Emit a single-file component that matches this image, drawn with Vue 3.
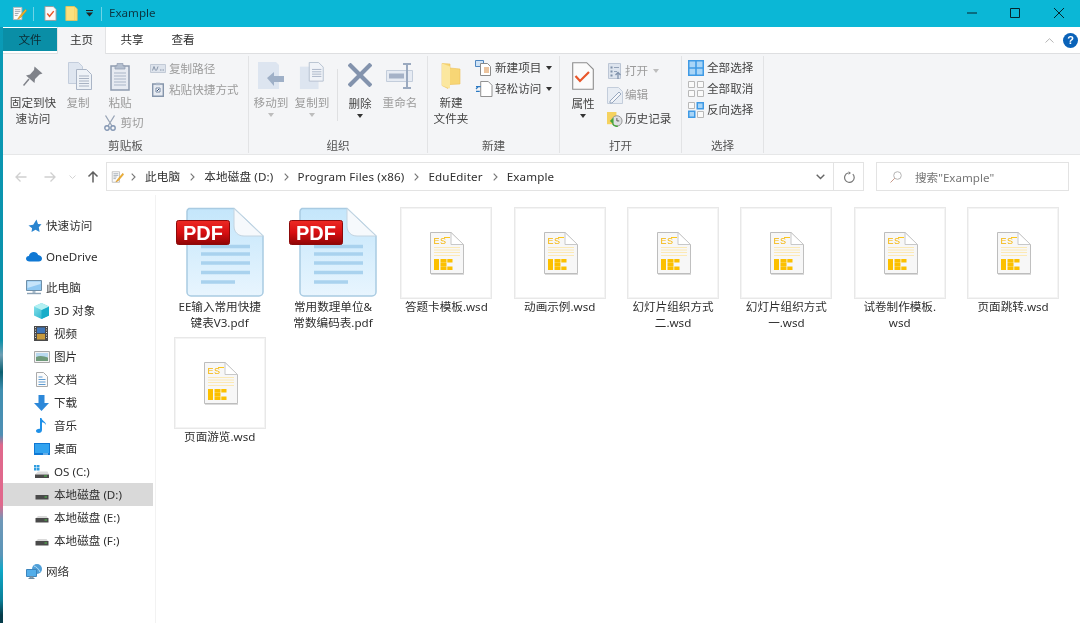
<script setup>
const nav = [
  { icon: 'star', label: '快速访问', lvl: 0 },
  { icon: 'cloud', label: 'OneDrive', lvl: 0, gap: true },
  { icon: 'pc', label: '此电脑', lvl: 0, gap: true },
  { icon: 'cube', label: '3D 对象', lvl: 1 },
  { icon: 'film', label: '视频', lvl: 1 },
  { icon: 'pic', label: '图片', lvl: 1 },
  { icon: 'doc', label: '文档', lvl: 1 },
  { icon: 'down', label: '下载', lvl: 1 },
  { icon: 'music', label: '音乐', lvl: 1 },
  { icon: 'desk', label: '桌面', lvl: 1 },
  { icon: 'osdrive', label: 'OS (C:)', lvl: 1 },
  { icon: 'drive', label: '本地磁盘 (D:)', lvl: 1, active: true },
  { icon: 'drive', label: '本地磁盘 (E:)', lvl: 1 },
  { icon: 'drive', label: '本地磁盘 (F:)', lvl: 1 },
  { icon: 'net', label: '网络', lvl: 0, gap: true }
]
const files = [
  { type: 'pdf', name: 'EE输入常用快捷\n键表V3.pdf' },
  { type: 'pdf', name: '常用数理单位&\n常数编码表.pdf' },
  { type: 'wsd', name: '答题卡模板.wsd' },
  { type: 'wsd', name: '动画示例.wsd' },
  { type: 'wsd', name: '幻灯片组织方式\n二.wsd' },
  { type: 'wsd', name: '幻灯片组织方式\n一.wsd' },
  { type: 'wsd', name: '试卷制作模板.\nwsd' },
  { type: 'wsd', name: '页面跳转.wsd' },
  { type: 'wsd', name: '页面游览.wsd' }
]
const crumbs = ['此电脑', '本地磁盘 (D:)', 'Program Files (x86)', 'EduEditer', 'Example']
</script>

<template>
  <svg class="defs" aria-hidden="true">
    <defs>
      <linearGradient id="pageBlue" x1="0" y1="0" x2="0" y2="1"><stop offset="0" stop-color="#c4e6fb"/><stop offset="1" stop-color="#e8f5fe"/></linearGradient>
      <linearGradient id="redBadge" x1="0" y1="0" x2="0" y2="1"><stop offset="0" stop-color="#ec2a24"/><stop offset=".5" stop-color="#d80f12"/><stop offset="1" stop-color="#8f0505"/></linearGradient>
      <linearGradient id="cubeFill" x1="0" y1="0" x2="1" y2="1"><stop offset="0" stop-color="#8fe6ee"/><stop offset="1" stop-color="#14a9c6"/></linearGradient>
    </defs>
    <symbol id="notes" viewBox="0 0 16 16"><path d="M1.500 1.500h9v13h-9z" fill="#fbfbfb" stroke="#b9b9b9"/><path d="M3 4h6M3 6h6M3 8h4M3 10h3" stroke="#9aa3ad"/><path d="M14.500 3.500 8 11l-2 3 3-1.500 6.500-7.500z" fill="#f5b52d" stroke="#c9851a" stroke-width=".6"/></symbol>
    <symbol id="checkpage" viewBox="0 0 14 16"><path d="M1 .5h9l3 3v12H1z" fill="#fafafa" stroke="#9b9b9b"/><path d="M3.500 8l2.500 3 4.500-5.500" fill="none" stroke="#e8562a" stroke-width="1.500"/></symbol>
    <symbol id="tfolder" viewBox="0 0 13 16"><path d="M.5.500h9l3 2.500v12.500h-12z" fill="#fbe07e" stroke="#e4c25c"/><path d="M10 1v14" stroke="#f7cf60"/></symbol>
    <symbol id="pin" viewBox="0 0 20 20"><path d="M11.500.5 19.500 7.500l-3 1-4.500 4.500-.5 4L3 9.500l4-1L11 4z" fill="#7f8289"/><path d="M6 13 .5 19.500" stroke="#7f8289" stroke-width="1.500"/></symbol>
    <symbol id="copy" viewBox="0 0 24 28"><path d="M.5.500h10l4 4v17H.5z" fill="#dfe6f0" stroke="#c3cddc"/><path d="M8.500 7.500h10l5 5v15h-15z" fill="#eef2f7" stroke="#aab5c6"/><path d="M11 14h10M11 16.500h10M11 19h10M11 21.500h10M11 24h10" stroke="#a8b2c2"/></symbol>
    <symbol id="paste" viewBox="0 0 20 29"><path d="M1 4h18v24H1z" fill="#e7ebf2" stroke="#8f9cb0" stroke-width="1.500"/><path d="M7 4V1.500h6V4h2v3H5V4z" fill="#b4bfcf" stroke="#8f9cb0" stroke-width=".7"/><path d="M4 11h12M4 14h12M4 17h12M4 20h12M4 23h12" stroke="#a9b5c7"/></symbol>
    <symbol id="scissors" viewBox="0 0 12 16"><path d="M1.500.5 8 11M10.500.5 4 11" stroke="#98a4b6" stroke-width="1.300" fill="none"/><circle cx="3" cy="13" r="2.200" fill="none" stroke="#8497b3" stroke-width="1.400"/><circle cx="9" cy="13" r="2.200" fill="none" stroke="#8497b3" stroke-width="1.400"/></symbol>
    <symbol id="cpath" viewBox="0 0 16 9"><path d="M.5.500h15v8H.5z" fill="#dde3ec" stroke="#c2cad6"/><path d="M2.500 6.500 4 2.500l1.500 4M6.500 6.500 8 2.500M10 6h1.500M12.500 6H14" stroke="#7f8da3" fill="none" stroke-width=".9"/></symbol>
    <symbol id="pshort" viewBox="0 0 12 15"><path d="M.7 2h10.600v12.300H.7z" fill="#e7ebf2" stroke="#8595ab" stroke-width="1.400"/><path d="M4 .7h4v2.500H4z" fill="#a9b5c7"/><path d="M4 6h4v4H4z" fill="#fff" stroke="#7688a2"/><path d="M5 9l2-2" stroke="#35507a"/></symbol>
    <symbol id="move" viewBox="0 0 27 28"><path d="M0 0h18l3 3v24H0z" fill="#dde5f0"/><path d="M9 16 16 10v4h10v6H16v4z" fill="#9fb0c7"/></symbol>
    <symbol id="copyto" viewBox="0 0 27 30"><path d="M0 5h20v24H0z" fill="#dde5f0"/><path d="M10 .5h10l5 5v15H10z" fill="#f0f3f8" stroke="#b4bfcf"/><path d="M13 8h10M13 10.500h10M13 13h10M13 15.500h10" stroke="#a8b4c6"/></symbol>
    <symbol id="del" viewBox="0 0 24 24"><path d="M2.500 2.500 21.500 21.500M21.500 2.500 2.500 21.500" stroke="#8393ad" stroke-width="4.200" stroke-linecap="square"/></symbol>
    <symbol id="rename" viewBox="0 0 28 26"><path d="M.5 7.500h26v11H.5z" fill="#e6ebf3" stroke="#c3cddb"/><path d="M3 10.500h15v5H3z" fill="#a5b2c7"/><path d="M21 1v24M17 1h8M17 25h8" stroke="#9aa9bf" stroke-width="2" fill="none"/></symbol>
    <symbol id="folder" viewBox="0 0 20 27"><path d="M1 1l8 .5v4l10 1v15L9 22 7 26 1 23z" fill="#f7d675" stroke="#eec158" stroke-width=".6"/><path d="M1 1l8 3v22L1 23z" fill="#fbe79f"/></symbol>
    <symbol id="newitem" viewBox="0 0 18 16"><path d="M.5.500h8v6H.5z" fill="#cfe3f6" stroke="#4f86c0"/><path d="M5.500 3.500h7l3 3v9h-10z" fill="#fff" stroke="#8b8b8b"/><path d="M9 8h5M9 10h5M9 12h5" stroke="#d9883c"/></symbol>
    <symbol id="easy" viewBox="0 0 18 17"><path d="M5.500.5h8l4 4v12h-12z" fill="#fff" stroke="#8a8a8a"/><path d="M.5 6h5M.5 8.500 3 6M.5 11h4" stroke="#2b79c2" stroke-width="1.200" fill="none"/></symbol>
    <symbol id="props" viewBox="0 0 22 28"><path d="M.7.700h14l6.600 6.600v20H.7z" fill="#fbfbfb" stroke="#8d8d8d" stroke-width="1.100"/><path d="M3.500 14l4.500 5 9-9" fill="none" stroke="#e8562a" stroke-width="2.200"/></symbol>
    <symbol id="openic" viewBox="0 0 14 17"><path d="M.5.500h12v15H.5z" fill="#dde4ee" stroke="#bcc6d5"/><path d="M2.500 3.500h2v2h-2zM2.500 7.500h2v2h-2zM2.500 11.500h2v2h-2z" fill="#7f90a8"/><path d="M6 4.500h5M6 8.500h3" stroke="#93a2b8"/><path d="M10 16V10M7.500 12 10 9.500 12.500 12" stroke="#8193ad" stroke-width="1.300" fill="none"/></symbol>
    <symbol id="edit" viewBox="0 0 16 17"><path d="M.5.500h11l4 4v12H.5z" fill="#e8edf4" stroke="#c3cddb"/><path d="M3 14 12 5l2 2-9 9H3z" fill="#f4f6fa" stroke="#98a8bf"/></symbol>
    <symbol id="hist" viewBox="0 0 17 16"><path d="M0 0h10v13H0z" fill="#f5d25f"/><circle cx="10.500" cy="9.500" r="5.500" fill="#dfe1e3" stroke="#8f8f8f"/><path d="M10.500 6.500v3h2.500" stroke="#555" fill="none"/><path d="M3 9.500 7 6v7z" fill="#47a63a"/><path d="M6 12.500c1 2 3.500 3 5.500 2.500" stroke="#47a63a" stroke-width="1.500" fill="none"/></symbol>
    <symbol id="selall" viewBox="0 0 16 16"><path d="M0 0h16v16H0z" fill="#3f9ae5"/><path d="M1.500 1.500h5.700v5.700H1.500zM8.800 1.500h5.700v5.700H8.800zM1.500 8.800h5.700v5.700H1.500zM8.800 8.800h5.700v5.700H8.800z" fill="#a9d5f7"/></symbol>
    <symbol id="selnone" viewBox="0 0 16 16"><path d="M.5.500h6v6h-6zM9.500.500h6v6h-6zM.5 9.500h6v6h-6zM9.500 9.500h6v6h-6z" fill="#fafafa" stroke="#b8b8b8"/></symbol>
    <symbol id="selinv" viewBox="0 0 16 16"><path d="M.5.500h6v6h-6zM9.500 9.500h6v6h-6z" fill="#fafafa" stroke="#b8b8b8"/><path d="M8.500 0H16v7.500H8.500zM0 8.500h7.500V16H0z" fill="#3f9ae5"/><path d="M10 1.500h4.500V6H10zM1.500 10H6v4.500H1.500z" fill="#a9d5f7"/></symbol>
    <symbol id="star" viewBox="0 0 14 14"><path d="M8.500.5 10 5l3.500.3-2.700 2.900.8 4.800L7.500 10.800 3.500 13l.6-3.800L.5 6.500 5.200 5.800z" fill="#2a85d0"/></symbol>
    <symbol id="cloud" viewBox="0 0 16 11"><path d="M3.500 10.500C1.500 10.500 0 9.300 0 7.700 0 6.200 1.200 5 2.800 5 3.500 2.500 5.500 1 7.800 1c2 0 3.700 1.100 4.400 3C14.400 4.200 16 5.700 16 7.500c0 1.800-1.400 3-3.200 3z" fill="#0f78d4"/></symbol>
    <symbol id="pc" viewBox="0 0 16 15"><path d="M.5.500h15v10H.5z" fill="#8fc8f2" stroke="#6f8fa8"/><path d="M1.500 1.500h13V4L1.500 8z" fill="#c6e4fa"/><path d="M6.500 11h3v2h-3z" fill="#a9bccb"/><path d="M1 13.500h14" stroke="#8ba2b5" stroke-width="1.400"/></symbol>
    <symbol id="cube" viewBox="0 0 15 16"><path d="M7.500 0 15 3.500v9L7.500 16 0 12.500v-9z" fill="url(#cubeFill)"/><path d="M7.500 7 15 3.500v9L7.500 16z" fill="#17adc9"/><path d="M0 3.500 7.500 0 15 3.500 7.500 7z" fill="#b3f0f2"/></symbol>
    <symbol id="film" viewBox="0 0 14 15"><path d="M0 0h14v15H0z" fill="#4a4a4a"/><path d="M3 1.500h8v5.500H3z" fill="#3d74b8"/><path d="M3 8h8v5.500H3z" fill="#c79a3c"/><path d="M1 1.500h1M1 4h1M1 6.500h1M1 9h1M1 11.500h1M12 1.500h1M12 4h1M12 6.500h1M12 9h1M12 11.500h1" stroke="#ddd"/></symbol>
    <symbol id="pic" viewBox="0 0 16 12"><path d="M.5.500h15v11H.5z" fill="#f2f2f2" stroke="#a8a8a8"/><path d="M2 2h12v4H2z" fill="#b9d9ef"/><path d="M2 6c4-2 8-1 12 .5V10H2z" fill="#6f9a7a"/></symbol>
    <symbol id="doc" viewBox="0 0 12 15"><path d="M.5.500h7l4 4v10H.5z" fill="#fbfbfb" stroke="#aaa"/><path d="M2.500 5h4M2.500 7.500h7M2.500 10h7M2.500 12.500h7" stroke="#5e9bd1"/></symbol>
    <symbol id="down" viewBox="0 0 15 16"><path d="M4.500 0h6v8H15l-7.500 8L0 8h4.500z" fill="#2c88d9"/></symbol>
    <symbol id="music" viewBox="0 0 11 15"><path d="M4 0h1.500c.3 3 4.500 3.500 4.500 7-.8-1.500-2.500-2.500-4-2.700V12c0 1.800-1.500 3-3.200 3C1.300 15 0 14.200 0 13c0-1.500 1.800-2.500 4-2.200z" fill="#1e90e8"/></symbol>
    <symbol id="desk" viewBox="0 0 16 12"><path d="M0 0h16v12H0z" fill="#0f78d4"/><path d="M1 1h14v9H1z" fill="#32a3ef"/><path d="M9 11h5" stroke="#bfe1fa"/></symbol>
    <symbol id="osdrive" viewBox="0 0 15 14"><path d="M0 0h2.500v2.500H0zM3 0h2.500v2.500H3zM0 3h2.500v2.500H0zM3 3h2.500v2.500H3z" fill="#2f9de0"/><path d="M2.500 8 4 6.500h9.500L15 9.500H1z" fill="#dcdcdc"/><path d="M1 9.500h14v3.500H1z" fill="#4a4a4a"/><path d="M10 11h3" stroke="#4fc14a"/></symbol>
    <symbol id="drive" viewBox="0 0 14 7"><path d="M1.500 1.500 3 0h8.500L13 2H1z" fill="#d9d9d9"/><path d="M.5 2h13v4.500H.5z" fill="#4a4a4a"/><path d="M9.500 4h2.500" stroke="#4fc14a"/></symbol>
    <symbol id="net" viewBox="0 0 16 15"><circle cx="11" cy="5" r="5" fill="#4f9fd8"/><path d="M8 2c2 .5 5 3 6 6" stroke="#b4dcf5" fill="none"/><path d="M.5 5.500h10v7H.5z" fill="#53aeea" stroke="#3c85bd"/><path d="M4 12.500h3V14H4zM2.500 14.500h6" stroke="#6d8aa0" fill="#9db7ca"/></symbol>
  </svg>

  <div class="app">
    <div class="strip"></div>
    <div class="win">
      <header class="title">
        <svg class="ti t1"><use href="#notes"/></svg>
        <i class="tsep"></i>
        <svg class="ti t2"><use href="#checkpage"/></svg>
        <svg class="ti t3"><use href="#tfolder"/></svg>
        <svg class="tdrop" viewBox="0 0 7 7"><path d="M0 0h7v1H0zM0 2.500h7L3.500 6.500z" fill="#222"/></svg>
        <i class="tsep t4"></i>
        <span class="tname">Example</span>
        <div class="controls">
          <svg class="c1" viewBox="0 0 10 10"><path d="M0 5h10" stroke="#0b3b46" stroke-width="1.200"/></svg>
          <svg class="c2" viewBox="0 0 10 10"><path d="M.5.500h9v9h-9z" fill="none" stroke="#06252c"/></svg>
          <svg class="c3" viewBox="0 0 10 10"><path d="M0 0l10 10M10 0 0 10" stroke="#06252c"/></svg>
        </div>
      </header>

      <nav class="tabs">
        <span class="tab file">文件</span>
        <span class="tab on">主页</span>
        <span class="tab t3w">共享</span>
        <span class="tab t4w">查看</span>
        <svg class="collapse" viewBox="0 0 9 5"><path d="M.5 4.500 4.500.7l4 3.800" fill="none" stroke="#b5b5b5"/></svg>
        <span class="help">?</span>
      </nav>

      <section class="ribbon">
        <div class="group g1">
          <div class="body">
            <div class="big w60"><svg class="ic pinic"><use href="#pin"/></svg><span>固定到快<br>速访问</span></div>
            <div class="big w30 dis"><svg class="ic copyic"><use href="#copy"/></svg><span>复制</span></div>
            <div class="big w54 dis"><svg class="ic pasteic"><use href="#paste"/></svg><span>粘贴</span>
              <div class="cut"><svg class="scis"><use href="#scissors"/></svg><span>剪切</span></div>
            </div>
            <div class="col first">
              <div class="row dis"><svg class="sm cp"><use href="#cpath"/></svg><span>复制路径</span></div>
              <div class="row dis"><svg class="sm ps"><use href="#pshort"/></svg><span>粘贴快捷方式</span></div>
            </div>
          </div>
          <div class="glabel">剪贴板</div>
        </div>

        <div class="group g2">
          <div class="body">
            <div class="big w44 dis"><svg class="ic mv"><use href="#move"/></svg><span>移动到</span><i class="tri lite"></i></div>
            <div class="big w38 dis"><svg class="ic mv"><use href="#copyto"/></svg><span>复制到</span><i class="tri lite"></i></div>
            <i class="vsep"></i>
            <div class="big w44"><svg class="ic delic"><use href="#del"/></svg><span>删除</span><i class="tri"></i></div>
            <div class="big w36 dis"><svg class="ic ren"><use href="#rename"/></svg><span>重命名</span></div>
          </div>
          <div class="glabel">组织</div>
        </div>

        <div class="group g3">
          <div class="body">
            <div class="big w46"><svg class="ic fold"><use href="#folder"/></svg><span>新建<br>文件夹</span></div>
            <div class="col">
              <div class="row"><svg class="sm nw"><use href="#newitem"/></svg><span>新建项目</span><i class="tri beside"></i></div>
              <div class="row"><svg class="sm nw"><use href="#easy"/></svg><span>轻松访问</span><i class="tri beside"></i></div>
            </div>
          </div>
          <div class="glabel">新建</div>
        </div>

        <div class="group g4">
          <div class="body">
            <div class="big w46"><svg class="ic prop"><use href="#props"/></svg><span>属性</span><i class="tri"></i></div>
            <div class="col tall">
              <div class="row dis"><svg class="sm op"><use href="#openic"/></svg><span>打开</span><i class="tri beside lite"></i></div>
              <div class="row dis"><svg class="sm op"><use href="#edit"/></svg><span>编辑</span></div>
              <div class="row"><svg class="sm op"><use href="#hist"/></svg><span>历史记录</span></div>
            </div>
          </div>
          <div class="glabel">打开</div>
        </div>

        <div class="group g5">
          <div class="body">
            <div class="col">
              <div class="row"><svg class="sm sel"><use href="#selall"/></svg><span>全部选择</span></div>
              <div class="row"><svg class="sm sel"><use href="#selnone"/></svg><span>全部取消</span></div>
              <div class="row"><svg class="sm sel"><use href="#selinv"/></svg><span>反向选择</span></div>
            </div>
          </div>
          <div class="glabel">选择</div>
        </div>
      </section>

      <div class="addr">
        <svg class="arrow" viewBox="0 0 12 12"><path d="M11.500 6H1M5.500 1.500 1 6l4.500 4.500" fill="none" stroke="#d0d0d0" stroke-width="1.300"/></svg>
        <svg class="arrow fwd" viewBox="0 0 12 12"><path d="M.5 6H11M6.500 1.500 11 6l-4.500 4.500" fill="none" stroke="#d0d0d0" stroke-width="1.300"/></svg>
        <svg class="mini" viewBox="0 0 7 4"><path d="M.5.500 3.500 3.500l3-3" fill="none" stroke="#d4d4d4"/></svg>
        <svg class="arrow up" viewBox="0 0 12 12"><path d="M6 11.500V1M1.500 5.500 6 1l4.500 4.500" fill="none" stroke="#606060" stroke-width="1.500"/></svg>
        <div class="pathbox">
          <svg class="picon"><use href="#notes"/></svg>
          <template v-for="c in crumbs" :key="c">
            <svg class="chev" viewBox="0 0 5 8"><path d="M.7.700 4 4 .7 7.300" fill="none" stroke="#777" stroke-width="1.100"/></svg>
            <span class="crumb">{{ c }}</span>
          </template>
          <span class="grow"></span>
          <svg class="ddown" viewBox="0 0 9 6"><path d="M.7.700 4.500 4.500 8.300.7" fill="none" stroke="#666" stroke-width="1.400"/></svg>
          <span class="refresh">
            <svg viewBox="0 0 12 12"><path d="M9.800 3.200A4.800 4.800 0 1 1 5 2" fill="none" stroke="#7a7a7a" stroke-width="1.200"/><path d="M5.500 .3 8 2 5.500 3.800z" fill="#7a7a7a"/></svg>
          </span>
        </div>
        <div class="search">
          <svg class="sic" viewBox="0 0 12 12"><circle cx="7.500" cy="4.500" r="3.800" fill="none" stroke="#b5b5b5"/><path d="M4.800 7.200.5 11.500" stroke="#c99a8a"/></svg>
          <span class="stext">搜索"Example"</span>
        </div>
      </div>

      <main class="main">
        <aside class="sidebar">
          <div v-for="n in nav" :key="n.label" class="item" :class="{ gap: n.gap, active: n.active, child: n.lvl === 1 }">
            <span class="nicon"><svg :class="'n-' + n.icon"><use :href="'#' + n.icon"/></svg></span>
            <span>{{ n.label }}</span>
          </div>
        </aside>
        <div class="files">
          <div v-for="f in files" :key="f.name" class="fileitem">
            <div class="thumb" :class="f.type">
              <svg v-if="f.type === 'pdf'" class="pdfic" viewBox="0 0 92 92">
                <path d="M15 1.500h45L89 29v56a4 4 0 0 1-4 4H17a4 4 0 0 1-4-4V5a3.500 3.500 0 0 1 2-3.500z" fill="url(#pageBlue)" stroke="#a9cbe2" stroke-width="1.500"/>
                <path d="M60 1.500 89 29H70c-6 0-10-4-10-10z" fill="#f6f9fc" stroke="#c4d4e0"/>
                <path d="M27 39.500h49M27 47h49M27 56h49M27 65.500h49M27 75h34" stroke="#a9d2ee" stroke-width="3.400"/>
                <rect x="2.500" y="13.500" width="53" height="24" rx="2" fill="url(#redBadge)" stroke="#8d0a0a"/>
                <text x="29" y="33" text-anchor="middle" class="pdftxt">PDF</text>
              </svg>
              <svg v-else class="wsdic" viewBox="0 0 34 43">
                <path d="M.5.500H21L33.500 12.500V41.500H.5z" fill="#f7f7f7" stroke="#bdbdbd"/>
                <path d="M21 .5V12.500H33.500z" fill="#fff" stroke="#c8c8c8"/>
                <path d="M33.800 13V42H1v.8h33.300z" fill="#cfcfcf"/>
                <text x="3.500" y="12" class="estxt">ES</text>
                <path d="M14 5.500h6" stroke="#fcc000" stroke-width=".9"/>
                <path d="M4 15.500h26M4 18h26M4 20.500h26M4 23.500h26" stroke="#fce9b4"/>
                <path d="M4 27h5v11H4zM10.500 27h6v3.400h-6zM17.300 27h5.200v3.400h-5.200zM10.500 30.800h6v3.400h-6zM10.500 34.600h6v3.400h-6zM17.300 34.600h5.200v3.400h-5.200z" fill="#fcc000"/>
              </svg>
            </div>
            <div class="fname">{{ f.name }}</div>
          </div>
        </div>
      </main>
    </div>
  </div>
</template>

<style>
html, body { margin: 0; overflow: hidden; background: #fff; }
</style>

<style scoped>
.defs { display: block; width: 0; height: 0; }
.app {
  display: flex; width: 1080px; height: 623px; overflow: hidden; background: #fff;
  font: 11.600px/16px "Noto Sans", "Noto Sans CJK SC", sans-serif; color: #2f2f2f;
  filter: blur(0.3px);
}
.strip { width: 3px; flex: none; background: linear-gradient(#0a9cb8 0, #0a8fa8 340px, #6f9fb4 355px, #0b5f70 372px, #3f8fb0 390px, #4f8fb4 435px, #e0688c 445px, #e0688c 505px, #6f98b8 520px, #5a95b8 555px, #0ea8c8 570px, #0a7f98 600px, #063c4a 615px); }
.win { flex: 1; min-width: 0; display: flex; flex-direction: column; }

.title { height: 27px; flex: none; margin-left: -3px; background: #0bb7d6; display: flex; align-items: center; position: relative; z-index: 1; color: #0b3743; }
.ti { flex: none; }
.t1 { width: 15px; height: 15px; margin-left: 12px; }
.tsep { width: 1px; height: 14px; background: #6fd4e6; margin-left: 6px; flex: none; }
.t2 { width: 13px; height: 15px; margin-left: 10px; }
.t3 { width: 13px; height: 15px; margin-left: 8px; }
.tdrop { width: 7px; height: 7px; margin-left: 8px; }
.t4 { margin-left: 8px; }
.tname { margin-left: 7px; padding-bottom: 1px; }
.controls { margin-left: auto; display: flex; align-items: center; padding-bottom: 1px; }
.controls svg { width: 10px; height: 10px; display: block; }
.c1 { margin-right: 33px; }
.c2 { margin-right: 34px; }
.c3 { margin-right: 16px; }

.tabs { height: 26px; flex: none; display: flex; align-items: stretch; position: relative; background: #fff; }
.tab { display: flex; align-items: center; justify-content: center; padding-bottom: 1px; box-sizing: border-box; }
.file { width: 54px; height: 23px; margin-top: 1px; background: #0a8ea6; color: #0c2b33; padding-bottom: 0; }
.on { width: 49px; background: #f4f5f7; border: 1px solid #e2e3e5; border-bottom: 0; border-top: 0; height: 27px; margin-bottom: -1px; position: relative; z-index: 1; }
.t3w { width: 52px; }
.t4w { width: 50px; }
.collapse { width: 9px; height: 5px; position: absolute; left: 1042px; top: 11px; }
.help { position: absolute; left: 1060px; top: 6px; width: 15px; height: 15px; border-radius: 50%; background: #0a62b8; color: #fff; font: 700 11px/15px "Liberation Sans", sans-serif; text-align: center; }

.ribbon { height: 102px; flex: none; box-sizing: border-box; display: flex; background: #f4f5f7; border-top: 1px solid #dedfe1; border-bottom: 1px solid #e6e7e8; }
.group { box-sizing: border-box; display: flex; flex-direction: column; border-right: 1px solid #e2e3e5; margin: 2px 0 1px; color: #444; }
.g1 { width: 246px; }
.g2 { width: 179px; }
.g3 { width: 132px; }
.g4 { width: 122px; }
.g5 { width: 82px; }
.body { flex: 1; display: flex; align-items: flex-start; min-height: 0; padding-top: 1px; }
.glabel { height: 16px; line-height: 18px; text-align: center; color: #555; }
.big { display: flex; flex-direction: column; align-items: center; text-align: center; flex: none; padding-top: 5px; color: #444; }
.big > span { white-space: nowrap; }
.ic { height: 28px; margin-bottom: 5px; flex: none; display: block; }
.w60 { width: 60px; } .w30 { width: 30px; } .w54 { width: 54px; } .w44 { width: 44px; } .w38 { width: 38px; } .w36 { width: 36px; } .w46 { width: 46px; }
.dis, .dis span { color: #9b9b9b; }
.pinic { width: 20px; height: 20px; margin: 4px 0 9px; }
.copyic { width: 24px; position: relative; left: 2px; }
.pasteic { width: 20px; height: 29px; margin-bottom: 4px; }
.mv { width: 27px; }
.delic { width: 24px; height: 24px; margin: 1px 0 9px; }
.ren { width: 28px; height: 26px; margin: 1px 0 6px; }
.fold { width: 20px; }
.prop { width: 22px; margin-bottom: 6px; }
.cut { display: flex; align-items: center; gap: 4px; margin-top: 4px; position: relative; left: 4px; }
.scis { width: 12px; height: 16px; }
.tri { width: 0; height: 0; border: 3px solid transparent; border-top: 4px solid #333; border-bottom: 0; margin-top: 2px; display: block; }
.tri.lite { border-top-color: #bdbdbd; }
.tri.beside { margin: 0 0 0 5px; }
.col { display: flex; flex-direction: column; margin-left: 1px; }
.first { margin-left: 3px; margin-top: 1px; }
.tall .row { height: 24px; }
.tall { margin-top: 2px; }
.row { height: 21px; display: flex; align-items: center; white-space: nowrap; }
.row svg.sm { flex: none; margin-right: 2px; }
.g5 .body { padding-left: 6px; }
.g5 .col { margin-left: 0; }
.cp { width: 16px; height: 9px; margin-right: 3px !important; }
.ps { width: 12px; height: 15px; margin: 0 5px 0 2px !important; }
.nw { width: 18px; height: 16px; }
.op { width: 16px; height: 17px; }
.sel { width: 16px; height: 16px; margin-right: 3px !important; }
.vsep { width: 1px; height: 52px; background: #dfe0e2; margin: 12px 0 0 6px; flex: none; }

.addr { height: 40px; flex: none; box-sizing: border-box; padding: 7px 11px 4px 12px; display: flex; align-items: center; }
.arrow { width: 12px; height: 12px; flex: none; }
.fwd { margin-left: 17px; }
.mini { width: 7px; height: 4px; margin-left: 13px; flex: none; }
.up { margin-left: 11px; }
.pathbox { margin-left: 7px; flex: 1; height: 29px; box-sizing: border-box; border: 1px solid #e3e3e3; display: flex; align-items: center; padding-left: 4px; }
.picon { width: 13px; height: 14px; flex: none; margin-right: 7px; }
.chev { width: 5px; height: 8px; flex: none; margin-right: 9px; }
.crumb { margin-right: 10px; white-space: nowrap; letter-spacing: .15px; }
.grow { flex: 1; }
.ddown { width: 9px; height: 6px; margin-right: 8px; }
.refresh { width: 30px; height: 100%; border-left: 1px solid #e3e3e3; display: flex; align-items: center; justify-content: center; box-sizing: border-box; }
.refresh svg { width: 12px; height: 12px; }
.search { width: 193px; height: 29px; flex: none; margin-left: 12px; box-sizing: border-box; border: 1px solid #e3e3e3; display: flex; align-items: center; padding-left: 13px; color: #777; }
.stext { padding-top: 2px; }
.sic { width: 12px; height: 12px; margin-right: 13px; }

.main { flex: 1; min-height: 0; display: flex; }
.sidebar { width: 150px; flex: none; padding-top: 19px; box-shadow: 2px 0 0 #fff, 3px 0 0 #f2f2f2; }
.item { height: 23px; display: flex; align-items: center; padding-left: 23px; white-space: nowrap; }
.item.gap { margin-top: 8px; }
.item.child { padding-left: 31px; }
.item.active { background: #d9d9d9; }
.nicon { width: 20px; flex: none; margin-right: 0; display: flex; align-items: center; }
.n-star { width: 14px; height: 14px; margin-left: 2px; }
.n-cloud { width: 16px; height: 11px; }
.n-pc { width: 16px; height: 15px; }
.n-cube { width: 15px; height: 16px; }
.n-film { width: 14px; height: 15px; }
.n-pic { width: 16px; height: 12px; }
.n-doc { width: 12px; height: 15px; margin-left: 2px; }
.n-down { width: 15px; height: 16px; }
.n-music { width: 11px; height: 15px; margin-left: 2px; }
.n-desk { width: 16px; height: 12px; }
.n-osdrive { width: 15px; height: 14px; }
.n-drive { width: 14px; height: 7px; margin-top: 4px; margin-left: 1px; }
.n-net { width: 16px; height: 15px; }

.files { flex: 1; min-width: 0; padding: 12px 0 0 10px; display: grid; grid-template-columns: repeat(8, 113.350px); grid-auto-rows: 130px; align-content: start; }
.fileitem { display: flex; flex-direction: column; align-items: center; }
.thumb { width: 92px; height: 92px; box-sizing: border-box; flex: none; display: flex; align-items: center; justify-content: center; }
.thumb.wsd { border: 1px solid #e8e8e8; outline: 1px solid #f4f4f4; outline-offset: -2px; }
.pdfic { width: 92px; height: 92px; }
.wsdic { width: 34px; height: 43px; margin: 1px 0 0 2px; }
.fname { width: 112px; text-align: center; white-space: pre-line; color: #2f2f2f; }

.pdftxt { font: 700 20px "Liberation Sans", sans-serif; fill: #fff; }
.estxt { font: 400 9px "Liberation Sans", sans-serif; letter-spacing: .4px; fill: #f5b400; }
</style>
